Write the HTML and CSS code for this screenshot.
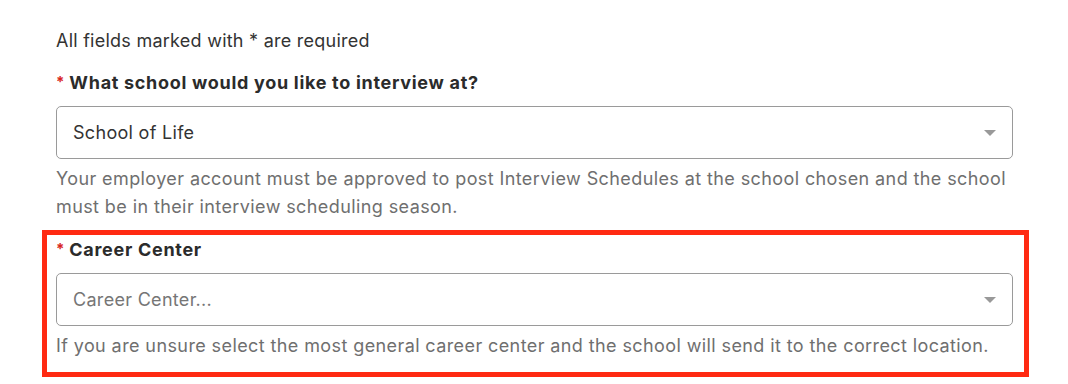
FILE: index.html
```html
<!DOCTYPE html>
<html lang="en">
<head>
<meta charset="utf-8">
<title>Interview schedule</title>
<link rel="stylesheet" href="styles.css">
</head>
<body>
<form class="form">
  <p class="intro">All fields marked with * are required</p>

  <div class="field">
    <label class="label"><span class="req">*</span> What school would you like to interview at?</label>
    <div class="select">
      <span class="value">School of Life</span>
      <span class="caret"></span>
    </div>
    <p class="help">Your employer account must be approved to post Interview Schedules at the school chosen and the school must be in their interview scheduling season.</p>
  </div>

  <div class="field highlight">
    <label class="label"><span class="req">*</span> Career Center</label>
    <div class="select">
      <span class="value placeholder">Career Center...</span>
      <span class="caret"></span>
    </div>
    <p class="help">If you are unsure select the most general career center and the school will send it to the correct location.</p>
  </div>
</form>
</body>
</html>
```

FILE: styles.css
```css
* { box-sizing: border-box; }

html, body {
  margin: 0;
  background: #ffffff;
}

body {
  font-family: Inter, "Noto Sans", "Liberation Sans", sans-serif;
  color: #333333;
}

.form {
  width: 1013px;
  padding: 29px 0 0 56px;
}

.intro {
  margin: 0;
  font-size: 18px;
  letter-spacing: 0.25px;
  line-height: 24px;
  color: #333333;
}

.field {
  margin-top: 17px;
}

.label {
  display: block;
  font-size: 18px;
  font-weight: 700;
  letter-spacing: 0.7px;
  line-height: 24px;
  color: #2b2b2b;
}

.req {
  color: #d8261c;
  font-size: 15px;
  vertical-align: 2px;
  letter-spacing: 0;
}

.select {
  margin-top: 11px;
  height: 53px;
  border: 1px solid #9a9a9a;
  border-radius: 5px;
  padding: 0 16px;
  display: flex;
  align-items: center;
  justify-content: space-between;
}

.value {
  font-size: 18px;
  letter-spacing: 0.3px;
  color: #333333;
}

.value.placeholder {
  color: #767676;
}

.caret {
  width: 0;
  height: 0;
  border-left: 6px solid transparent;
  border-right: 6px solid transparent;
  border-top: 6px solid #999999;
}

.help {
  margin: 6px 0 0;
  font-size: 18px;
  letter-spacing: 0.4px;
  line-height: 28px;
  color: #6f6f6f;
}

.highlight {
  margin-top: 9px;
  margin-left: -14px;
  margin-right: -16px;
  border: 5px solid #ff2a12;
  padding: 2px 11px 12px 9px;
}
```
